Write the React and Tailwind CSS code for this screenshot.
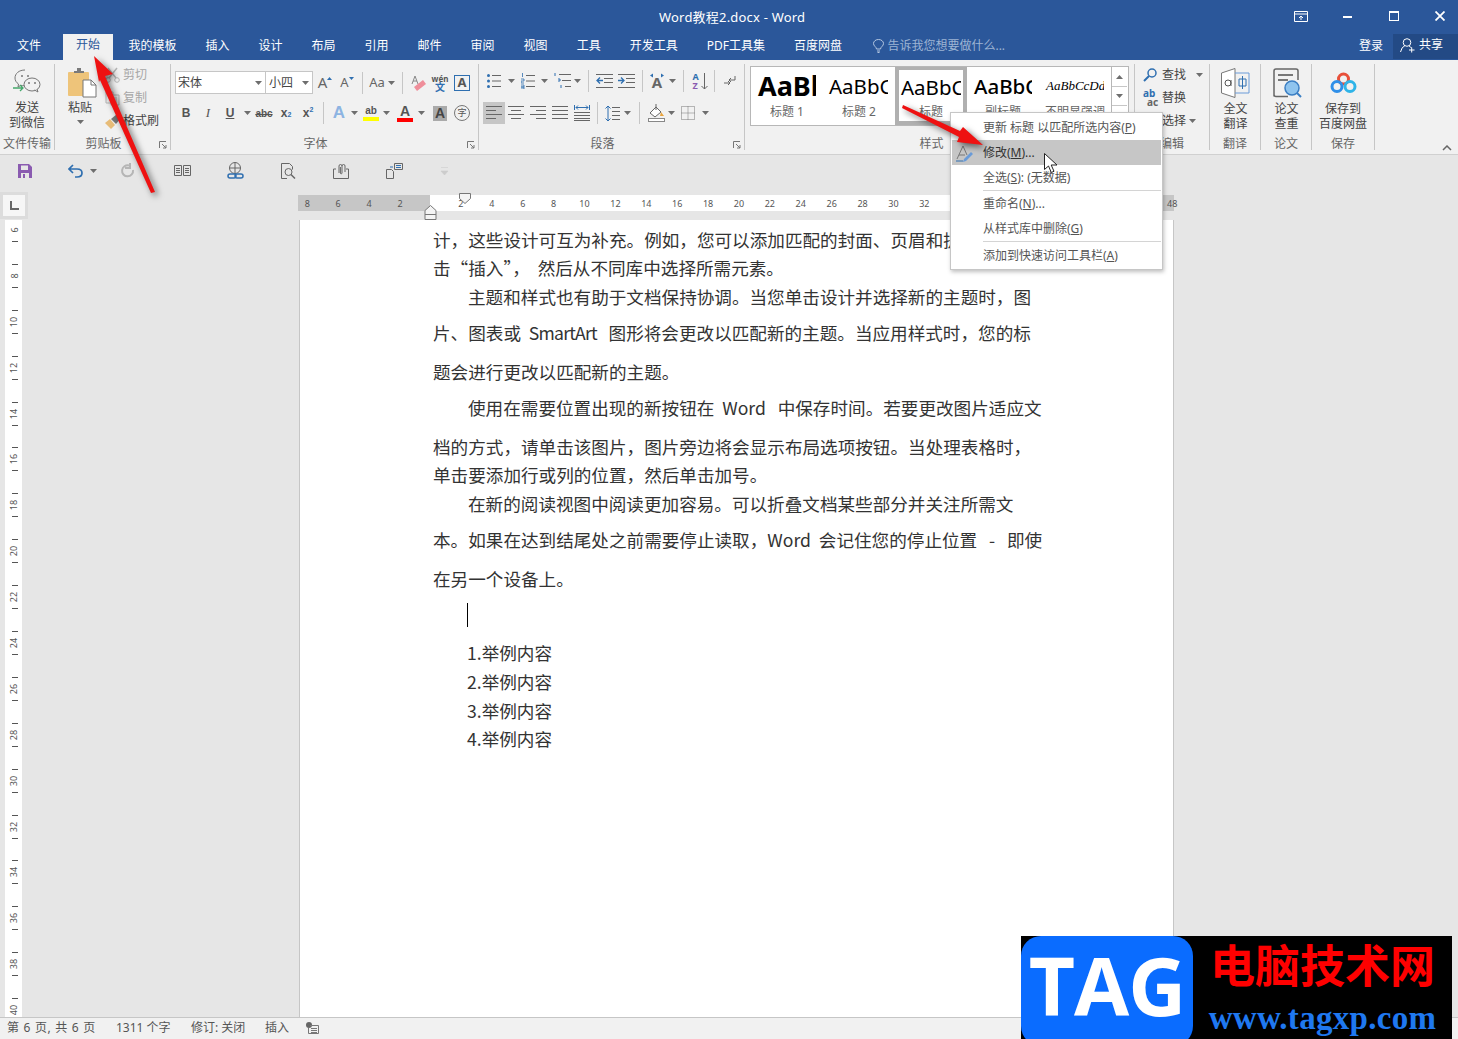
import React from "react";

const cjk = "font-['Noto_Sans','Noto_Sans_CJK_SC',sans-serif]";

const Caret = ({ className = "" }) => (
  <svg width="7" height="4" viewBox="0 0 7 4" className={className}>
    <path d="M0 0h7L3.5 4z" fill="#6e6e6e" />
  </svg>
);

const Cell = ({ className = "w-[22px]", children }) => (
  <div className={"flex h-[22px] shrink-0 items-center justify-center " + className}>{children}</div>
);

const Sep = ({ className = "" }) => <div className={"h-[22px] w-px shrink-0 bg-[#c6c6c6] " + className} />;

const Launcher = () => (
  <svg width="8" height="8" viewBox="0 0 8 8" className="absolute right-[3px] bottom-[1px]">
    <path d="M0.5 7V0.5H7M3 3l4 4M7 4v3H4" fill="none" stroke="#777" />
  </svg>
);

const Group = ({ label, className, labelClass = "", launcher, children }) => (
  <div className={"flex h-[86px] shrink-0 flex-col border-r border-[#c6c6c6] " + className}>
    <div className="h-[72px]">{children}</div>
    <div className={"relative h-[14px] text-center text-[12px] leading-[16px] text-[#666] " + labelClass}>
      {label}
      {launcher && <Launcher />}
    </div>
  </div>
);

const Lines = ({ d, stroke = "#666", w = 16, h = 14 }) => (
  <svg width={w} height={h} viewBox={`0 0 ${w} ${h}`}>
    <path d={d} fill="none" stroke={stroke} />
  </svg>
);

const BigText = ({ a, b }) => (
  <div className="mt-[3px] text-center text-[12px] leading-[15px] text-[#444]">
    <div>{a}</div>
    <div>{b}</div>
  </div>
);

const WeChatIcon = () => (
  <svg width="28" height="26" viewBox="0 0 28 26">
    <path d="M12 1C6 1 2 4.500 2 9c0 2.500 1.300 4.500 3.500 6L5 18l3-1.700c1 .3 1.800.4 3 .4" fill="none" stroke="#777" />
    <ellipse cx="19" cy="15.500" rx="8" ry="6.500" fill="#f1f1f1" stroke="#777" />
    <path d="M24 20l1 3-3.500-2" fill="#f1f1f1" stroke="#777" />
    <circle cx="9" cy="7" r="1" fill="#777" /><circle cx="15" cy="7" r="1" fill="#777" />
    <circle cx="16" cy="14" r="1" fill="#777" /><circle cx="22" cy="14" r="1" fill="#777" />
    <path d="M0 19h10M7 16l3 3-3 3" fill="none" stroke="#45a86b" strokeWidth="1.300" />
  </svg>
);

const PasteIcon = () => (
  <svg width="29" height="30" viewBox="0 0 29 30">
    <rect x="0" y="4" width="21" height="24" rx="1" fill="#eec47a" />
    <path d="M6 5V3h3V0h4v3h3v2z" fill="#7a7a7a" />
    <path d="M15 12h8l5 5v12H15z" fill="#fff" stroke="#777" />
    <path d="M23 12v5h5" fill="none" stroke="#777" />
  </svg>
);

const Scissors = () => (
  <svg width="15" height="16" viewBox="0 0 15 16">
    <path d="M3 1l8 10M12 1L4 11" stroke="#b5b5b5" strokeWidth="1.500" fill="none" />
    <circle cx="3" cy="13" r="2.300" fill="none" stroke="#b5b5b5" />
    <circle cx="12" cy="13" r="2.300" fill="none" stroke="#b5b5b5" />
  </svg>
);

const CopyIcon = () => (
  <svg width="15" height="15" viewBox="0 0 15 15">
    <path d="M1 1h7v11H1z" fill="none" stroke="#b5b5b5" />
    <path d="M6 4h8v10H6z" fill="#eee" stroke="#b5b5b5" />
    <path d="M8 7h4M8 9h4M8 11h4" stroke="#b5b5b5" />
  </svg>
);

const Brush = () => (
  <svg width="16" height="15" viewBox="0 0 16 15">
    <path d="M0 9l5-4 5 6-4 4z" fill="#e7bc78" />
    <path d="M6 5l6-5 4 4-5 6z" fill="#777" />
  </svg>
);

const Eraser = () => (
  <svg width="17" height="18" viewBox="0 0 17 18">
    <path d="M2 10l3-8 3 8M3 7h4" fill="none" stroke="#888" />
    <path d="M4 13l9-7 3 4-9 7z" fill="#ef8e9a" />
  </svg>
);

const LightGrid = () => (
  <svg width="14" height="14" viewBox="0 0 14 14">
    <path d="M.5.500h13v13H.500zM7 .500v13M.500 7h13" fill="none" stroke="#777" strokeDasharray="1 1" />
  </svg>
);

const ParaRow1 = () => (
  <div className="flex items-center">
    <Cell>
      <svg width="14" height="16" viewBox="0 0 14 16">
        <path d="M5 2.500h9M5 8h9M5 13.500h9" stroke="#666" />
        <circle cx="1.500" cy="2.500" r="1.500" fill="#2f6fb0" /><circle cx="1.500" cy="8" r="1.500" fill="#2f6fb0" /><circle cx="1.500" cy="13.500" r="1.500" fill="#2f6fb0" />
      </svg>
    </Cell>
    <Cell className="w-[12px]"><Caret /></Cell>
    <Cell>
      <svg width="14" height="16" viewBox="0 0 14 16">
        <path d="M5 2.500h9M5 8h9M5 13.500h9" stroke="#666" />
        <path d="M1.500 0v4M0 6h3v2H0v2h3M0 12h3v2H0h3v2H0" fill="none" stroke="#2f6fb0" strokeWidth=".8" />
      </svg>
    </Cell>
    <Cell className="w-[10px]"><Caret /></Cell>
    <Cell className="ml-[2px] w-[22px]">
      <svg width="17" height="16" viewBox="0 0 17 16">
        <path d="M5 1.500h12M8 7.500h9M11 13.500h6" stroke="#666" />
        <path d="M1 0v3M4 6h2v2H4M7 12v3" fill="none" stroke="#2f6fb0" />
      </svg>
    </Cell>
    <Cell className="w-[8px]"><Caret /></Cell>
    <Sep className="ml-[7px]" />
    <Cell className="ml-[4px] w-[22px]">
      <svg width="17" height="14" viewBox="0 0 17 14">
        <path d="M0 .500h17M8 4.500h9M8 8.500h9M0 13.500h17" stroke="#666" />
        <path d="M7 6.500H1M4 3.500l-3 3 3 3" fill="none" stroke="#2f6fb0" strokeWidth="1.300" />
      </svg>
    </Cell>
    <Cell>
      <svg width="17" height="14" viewBox="0 0 17 14">
        <path d="M0 .500h17M8 4.500h9M8 8.500h9M0 13.500h17" stroke="#666" />
        <path d="M0 6.500h6M3 3.500l3 3-3 3" fill="none" stroke="#2f6fb0" strokeWidth="1.300" />
      </svg>
    </Cell>
    <Sep className="ml-[5px]" />
    <Cell className="ml-[3px] w-[22px]">
      <div className="relative flex h-[16px] w-[16px] items-end justify-center text-[15px] leading-[14px] font-bold text-[#666]">
        A
        <svg width="16" height="5" viewBox="0 0 16 5" className="absolute top-0 left-0">
          <path d="M1 2.500l3-2v4zM15 2.500l-3-2v4z" fill="#2f6fb0" />
        </svg>
      </div>
    </Cell>
    <Cell className="w-[8px]"><Caret /></Cell>
    <Sep className="ml-[7px]" />
    <Cell className="ml-[5px] w-[22px]">
      <div className="flex h-[18px] w-[8px] flex-col text-[9px] leading-[9px] font-bold">
        <span className="text-[#2f6fb0]">A</span>
        <span className="text-[#8a5bb0]">Z</span>
      </div>
      <svg width="7" height="17" viewBox="0 0 7 17"><path d="M3.500 0v16M.5 13l3 3 3-3" fill="none" stroke="#666" /></svg>
    </Cell>
    <Sep className="ml-[3px]" />
    <Cell className="ml-[4px] w-[22px]">
      <svg width="12" height="13" viewBox="0 0 12 13">
        <path d="M11 1v4H5M7 3L5 5l2 2M0 8h6M4 6l2 2-2 2" fill="none" stroke="#666" />
      </svg>
    </Cell>
  </div>
);

const aligns = [
  "M0 .500h16M0 4.500h10M0 8.500h16M0 12.500h10",
  "M0 .500h16M3 4.500h10M0 8.500h16M3 12.500h10",
  "M0 .500h16M6 4.500h10M0 8.500h16M6 12.500h10",
  "M0 .500h16M0 4.500h16M0 8.500h16M0 12.500h16",
];

const ParaRow2 = () => (
  <div className="flex items-center">
    <Cell className="w-[22px] bg-[#c6c6c6]"><Lines d={aligns[0]} /></Cell>
    <Cell><Lines d={aligns[1]} /></Cell>
    <Cell><Lines d={aligns[2]} /></Cell>
    <Cell><Lines d={aligns[3]} /></Cell>
    <Cell>
      <svg width="16" height="16" viewBox="0 0 16 16">
        <path d="M0 7.500h16M0 10.500h16M0 13.500h16M0 15.500h16" stroke="#666" />
        <path d="M.5 0v5M15.500 0v5M2 2.500h12M4 .500l-2 2 2 2M12 .500l2 2-2 2" fill="none" stroke="#2f6fb0" />
      </svg>
    </Cell>
    <Sep className="ml-[4px]" />
    <Cell className="ml-[3px] w-[22px]">
      <svg width="15" height="17" viewBox="0 0 15 17">
        <path d="M7 2.500h8M7 6.500h8M7 10.500h8M7 14.500h8" stroke="#666" />
        <path d="M3 1v15M.5 3.500L3 1l2.500 2.500M.5 13.500L3 16l2.500-2.500" fill="none" stroke="#2f6fb0" />
      </svg>
    </Cell>
    <Cell className="w-[8px]"><Caret /></Cell>
    <Sep className="ml-[8px]" />
    <Cell className="ml-[5px] w-[22px]">
      <svg width="17" height="18" viewBox="0 0 17 18">
        <path d="M2 9l6-6 5 5-6 5z" fill="#fff" stroke="#666" />
        <path d="M13 8l3 4h-4z" fill="#e8a33d" />
        <path d="M8 0v6" stroke="#666" />
        <rect x=".5" y="14.500" width="16" height="3" fill="#fff" stroke="#888" />
      </svg>
    </Cell>
    <Cell className="w-[8px]"><Caret /></Cell>
    <Cell className="ml-[2px] w-[22px]"><LightGrid /></Cell>
    <Cell className="ml-[2px] w-[8px]"><Caret /></Cell>
  </div>
);

const StyleItem = ({ sample, label, className = "", selected }) => (
  <div
    className={
      "flex h-[58px] w-[72px] shrink-0 flex-col items-center overflow-hidden " +
      (selected ? "border-[4px] border-t-[3px] border-[#b0b0b0]" : "")
    }
  >
    <div className={"self-start overflow-hidden whitespace-nowrap text-black " + className}>{sample}</div>
    <div className="text-[12px] leading-[14px] text-[#666]">{label}</div>
  </div>
);

const Ribbon = () => (
  <div className="flex h-[95px] shrink-0 border-b border-[#d0d0d0] bg-[#f1f1f1] pt-[4px] text-[#444]">
    <Group label="文件传输" className="w-[55px]">
      <div className="flex flex-col items-center pt-[5px]">
        <WeChatIcon />
        <div className="pt-[2px]"><BigText a="发送" b="到微信" /></div>
      </div>
    </Group>

    <Group label="剪贴板" labelClass="pr-[18px]" className="w-[116px]" launcher>
      <div className="flex pt-[4px]">
        <div className="ml-[13px] flex w-[29px] flex-col items-start">
          <PasteIcon />
          <div className="mt-[2px] text-[12px] leading-[15px]">粘贴</div>
          <Caret className="mt-[5px] ml-[9px]" />
        </div>
        <div className="-mt-[4px] ml-[8px] flex flex-col gap-[1px] text-[12px]">
          <div className="flex h-[22px] items-center gap-[3px] text-[#a6a6a6]"><Scissors />剪切</div>
          <div className="flex h-[22px] items-center gap-[3px] text-[#a6a6a6]"><CopyIcon />复制</div>
          <div className="flex h-[22px] items-center gap-[2px] text-[#444]"><Brush />格式刷</div>
        </div>
      </div>
    </Group>

    <Group label="字体" labelClass="pr-[18px]" className="w-[308px]" launcher>
      <div className="pt-[7px] pl-[4px]">
        <div className="flex h-[23px] items-center">
          <div className="flex h-[23px] w-[91px] shrink-0 items-center justify-between border border-[#c6c6c6] bg-white pr-[3px] pl-[2px] text-[12px]">
            宋体<Caret />
          </div>
          <div className="-ml-px flex h-[23px] w-[48px] shrink-0 items-center justify-between border border-[#c6c6c6] bg-white pr-[3px] pl-[3px] text-[12px]">
            小四<Caret />
          </div>
          <Cell className="ml-px w-[22px]">
            <span className="text-[15px] text-[#666]">A</span>
            <svg width="5" height="3" viewBox="0 0 5 3" className="mb-[9px]"><path d="M0 3l2.500-3L5 3z" fill="#2f6fb0" /></svg>
          </Cell>
          <Cell>
            <span className="text-[13px] text-[#666]">A</span>
            <svg width="5" height="3" viewBox="0 0 5 3" className="mb-[9px]"><path d="M0 0l2.500 3L5 0z" fill="#2f6fb0" /></svg>
          </Cell>
          <Sep className="ml-[4px]" />
          <Cell className="w-[38px] gap-[3px]">
            <span className="text-[13px] text-[#666]">Aa</span><Caret />
          </Cell>
          <Sep className="ml-[1px]" />
          <Cell className="ml-[4px] w-[22px]"><Eraser /></Cell>
          <Cell>
            <div className="flex flex-col items-center text-[8px] leading-[9px] font-bold text-[#555]">
              wén<span className="text-[10px] text-[#2f6fb0]">文</span>
            </div>
          </Cell>
          <Cell>
            <div className="flex h-[16px] w-[16px] items-center justify-center border border-[#2f6fb0] text-[13px] font-bold text-[#555]">A</div>
          </Cell>
        </div>
        <div className="mt-[8px] flex h-[22px] items-center font-['Liberation_Sans',sans-serif] text-[#555]">
          <Cell className="w-[22px] text-[12px] font-bold">B</Cell>
          <Cell className="w-[22px] font-['Liberation_Serif',serif] text-[13px] italic">I</Cell>
          <Cell className="w-[22px] text-[12px] font-bold underline">U</Cell>
          <Cell className="w-[12px]"><Caret /></Cell>
          <Cell className="w-[22px] text-[10px] font-bold line-through">abc</Cell>
          <Cell className="w-[22px] text-[12px] font-bold">x<span className="mt-[5px] text-[7px] text-[#2f6fb0]">2</span></Cell>
          <Cell className="w-[22px] text-[12px] font-bold">x<span className="mb-[5px] text-[7px] text-[#2f6fb0]">2</span></Cell>
          <Sep className="ml-[4px]" />
          <Cell className="ml-[4px] w-[22px] text-[17px] font-bold text-[#8db4e2]">A</Cell>
          <Cell className="w-[8px]"><Caret /></Cell>
          <Cell className="ml-[2px] w-[22px]">
            <div className="flex w-[17px] flex-col items-center">
              <span className="text-[10px] leading-[12px] font-bold">ab</span>
              <div className="h-[4px] w-[16px] bg-[#ffff00]" />
            </div>
          </Cell>
          <Cell className="w-[8px]"><Caret /></Cell>
          <Cell className="ml-[4px] w-[22px]">
            <div className="flex w-[17px] flex-col items-center">
              <span className="text-[14px] leading-[13px] font-bold">A</span>
              <div className="h-[4px] w-[16px] bg-[#ff0000]" />
            </div>
          </Cell>
          <Cell className="w-[10px]"><Caret /></Cell>
          <Cell className="ml-[3px] w-[22px]">
            <div className="flex h-[15px] w-[14px] items-center justify-center bg-[#aaa] text-[14px] font-bold text-[#444]">A</div>
          </Cell>
          <Cell>
            <div className={"flex h-[16px] w-[16px] items-center justify-center rounded-full border border-[#777] text-[9px] " + cjk}>字</div>
          </Cell>
        </div>
      </div>
    </Group>

    <Group label="段落" labelClass="pr-[18px]" className="w-[266px]" launcher>
      <div className="pt-[6px] pl-[4px]">
        <ParaRow1 />
        <div className="mt-[10px]"><ParaRow2 /></div>
      </div>
    </Group>

    <Group label="样式" labelClass="pr-[16px]" className="w-[390px]">
      <div className="flex pt-[2px] pl-[5px]">
        <div className="flex h-[60px] w-[379px] border border-[#b7b7b7] bg-white">
          <StyleItem sample="AaBb" label="标题 1" className="w-[65px] pl-[7px] text-[27px] leading-[38px] font-bold" />
          <StyleItem sample="AaBbC" label="标题 2" className="w-[65px] pl-[6px] text-[20.500px] leading-[38px]" />
          <StyleItem sample="AaBbC" label="标题" className="w-[62px] pl-[2px] text-[20.500px] leading-[35px]" selected />
          <StyleItem sample="AaBbC" label="副标题" className="w-[65px] pl-[7px] text-[20.500px] leading-[38px] font-medium" />
          <StyleItem sample="AaBbCcDd" label="不明显强调" className="w-[65px] pl-[7px] font-['Liberation_Serif',serif] text-[13px] leading-[38px] italic" />
          <div className="flex w-[16px] flex-col border-l border-[#b7b7b7]">
            <div className="flex h-[20px] items-center justify-center border-b border-[#c6c6c6]"><Caret className="rotate-180" /></div>
            <div className="flex h-[19px] items-center justify-center border-b border-[#c6c6c6]"><Caret /></div>
            <div className="flex flex-1 items-center justify-center"><Caret /></div>
          </div>
        </div>
      </div>
    </Group>

    <Group label="编辑" className="w-[75px]">
      <div className="-mt-px flex flex-col pl-[8px] text-[12px]">
        <div className="flex h-[23px] items-center gap-[5px]">
          <svg width="14" height="14" viewBox="0 0 14 14">
            <circle cx="9" cy="5" r="4" fill="none" stroke="#2f6fb0" strokeWidth="1.500" />
            <path d="M6 8l-5 5" stroke="#2f6fb0" strokeWidth="2" />
          </svg>
          查找<Caret className="ml-[5px]" />
        </div>
        <div className="flex h-[24px] items-center gap-[3px]">
          <div className="flex w-[16px] flex-col text-[10px] leading-[9px] font-bold">
            <span className="text-[#2f6fb0]">ab</span>
            <span className="pl-[4px] text-[#666]">ac</span>
          </div>
          替换
        </div>
        <div className="flex h-[22px] items-center gap-[3px] pl-[19px]">选择<Caret /></div>
      </div>
    </Group>

    <Group label="翻译" className="w-[51px]">
      <div className="flex flex-col items-center pt-[4px] pl-px">
        <svg width="29" height="30" viewBox="0 0 29 30">
          <path d="M.5 5L14 .5v29L.5 25z" fill="#fff" stroke="#777" />
          <path d="M14 5h14v20H14" fill="none" stroke="#6a9bd8" />
          <path d="M18 11h7v7h-7zM21.500 8v13" fill="none" stroke="#2f6fb0" />
          <circle cx="7" cy="15" r="3" fill="none" stroke="#555" />
          <path d="M10 12v6" stroke="#555" />
        </svg>
        <BigText a="全文" b="翻译" />
      </div>
    </Group>

    <Group label="论文" className="w-[51px]">
      <div className="flex flex-col items-center pt-[4px] pl-px">
        <svg width="30" height="30" viewBox="0 0 30 30">
          <path d="M2 28.500V3q0-2 2-2h20q2 0 2 2v9M16 28.500H4q-2 0-2-2" fill="none" stroke="#666" strokeWidth="1.500" />
          <path d="M6 6h15v2H6zM6 11h10v2H6z" fill="#777" />
          <circle cx="20" cy="20" r="7" fill="#8fc4ee" stroke="#3b7fc4" strokeWidth="1.500" />
          <path d="M25 25l4 4" stroke="#3b7fc4" strokeWidth="2" />
        </svg>
        <BigText a="论文" b="查重" />
      </div>
    </Group>

    <Group label="保存" className="w-[63px]">
      <div className="flex flex-col items-center pt-[7px]">
        <svg width="27" height="27" viewBox="0 0 27 27">
          <circle cx="13.500" cy="8" r="5" fill="none" stroke="#e8503a" strokeWidth="3" />
          <circle cx="7" cy="15.500" r="5" fill="none" stroke="#2f8fe8" strokeWidth="3" />
          <circle cx="20" cy="15.500" r="5" fill="none" stroke="#2fb4e8" strokeWidth="3" />
        </svg>
        <BigText a="保存到" b="百度网盘" />
      </div>
    </Group>

    <div className="flex flex-1 items-end justify-end pr-[6px] pb-[3px]">
      <svg width="10" height="6" viewBox="0 0 10 6"><path d="M1 5l4-4 4 4" fill="none" stroke="#666" strokeWidth="1.500" /></svg>
    </div>
  </div>
);

const QuickBar = () => (
  <div className="flex h-[37px] shrink-0 items-center bg-[#e6e6e6] pb-[6px] pl-[18px]">
    <svg width="14" height="14" viewBox="0 0 14 14">
      <path d="M0 0h11l3 3v11H0z" fill="#8a5bb0" />
      <path d="M3 1.500h7V6H3z" fill="#e6e6e6" />
      <path d="M3 9h8v5H3z" fill="#e6e6e6" />
      <path d="M5 10h2v4H5z" fill="#8a5bb0" />
    </svg>
    <svg width="15" height="14" viewBox="0 0 15 14" className="ml-[36px]">
      <path d="M5 1L1 5l4 4M1 5h8q5 0 5 4t-5 4H7" fill="none" stroke="#2f6fb0" strokeWidth="1.700" />
    </svg>
    <Caret className="ml-[7px]" />
    <svg width="15" height="15" viewBox="0 0 15 15" className="ml-[23px]">
      <path d="M9 2.500a5.500 5.500 0 1 0 4 4.500M10 0v5H5" fill="none" stroke="#b5b5b5" strokeWidth="2" />
    </svg>
    <svg width="17" height="11" viewBox="0 0 17 11" className="ml-[39px]">
      <path d="M.5.500h7v10h-7zM9.500.500h7v10h-7zM2 3.500h4M2 5.500h4M2 7.500h4M11 3.500h4M11 5.500h4M11 7.500h4" fill="none" stroke="#666" />
    </svg>
    <svg width="17" height="17" viewBox="0 0 17 17" className="ml-[36px]">
      <circle cx="8" cy="6" r="5.500" fill="none" stroke="#666" />
      <path d="M2.500 6h11M8 .5v11" stroke="#666" />
      <path d="M3 12h4a2 2 0 0 1 0 4H3a2 2 0 0 1 0-4zM10 12h4a2 2 0 0 1 0 4h-4a2 2 0 0 1 0-4z" fill="#e6e6e6" stroke="#2f6fb0" strokeWidth="1.500" />
    </svg>
    <svg width="15" height="16" viewBox="0 0 15 16" className="ml-[37px]">
      <path d="M6 15.500H.5V.5h8l3 3v3" fill="none" stroke="#666" />
      <circle cx="7.500" cy="9" r="3.500" fill="none" stroke="#666" />
      <path d="M10 11.500l4 4" stroke="#666" strokeWidth="1.500" />
    </svg>
    <svg width="16" height="16" viewBox="0 0 16 16" className="ml-[37px]">
      <path d="M3 6H.5v9.500h15V6H13" fill="none" stroke="#666" />
      <path d="M6 10V3a1.500 1.500 0 0 1 3 0v7a.8.8 0 0 1-1.600 0V4M9 3a1.500 1.500 0 0 1 3 0v6" fill="none" stroke="#666" />
    </svg>
    <svg width="17" height="16" viewBox="0 0 17 16" className="ml-[37px]">
      <path d="M.5 6.500h5l2 2v7H.500zM8.500.500h8v6h-8z" fill="none" stroke="#666" />
      <path d="M4 4h3M10 2.500h5M10 4.500h5" stroke="#2f6fb0" />
    </svg>
    <svg width="9" height="8" viewBox="0 0 9 8" className="ml-[37px]">
      <path d="M1 .5h7M1 4h7l-3.500 4z" fill="#ccc" stroke="#ccc" strokeWidth=".6" />
    </svg>
  </div>
);

const hrNums = [];
for (let n = 2; n <= 46; n += 2) hrNums.push(n);

const RulerRow = () => (
  <div className="flex h-[28px] shrink-0 bg-[#e6e6e6]">
    <div className="h-[27px] w-[28px] shrink-0 bg-[#dcdcdc] p-[3px]">
      <div className="flex h-full w-full items-center justify-center bg-[#f6f6f6]">
        <div className="h-[9px] w-[9px] border-b-2 border-l-2 border-[#666]" />
      </div>
    </div>
    <div className="relative mt-[3px] ml-[270px] flex h-[16px] w-[876px] text-[9px] leading-[17px] text-[#555]">
      <div className="flex w-[132px] justify-end overflow-hidden bg-[#c6c6c6] pr-[14.600px]">
        {[8, 6, 4, 2].map((n) => (
          <div key={n} className="w-[30.900px] shrink-0 text-center">{n}</div>
        ))}
      </div>
      <div className="flex w-[733px] overflow-hidden bg-white pl-[15.500px]">
        {hrNums.map((n) => (
          <div key={n} className="w-[30.900px] shrink-0 text-center">{n}</div>
        ))}
      </div>
      <div className="w-[11px] bg-[#c6c6c6] pl-[4px] whitespace-nowrap">48</div>
      <svg width="13" height="12" viewBox="0 0 13 12" className="absolute top-[-2px] left-[161px]">
        <path d="M.5.500h11v5l-5.500 5-5.500-5z" fill="#f4f4f4" stroke="#777" />
      </svg>
      <svg width="13" height="15" viewBox="0 0 13 15" className="absolute top-[10px] left-[126px]">
        <path d="M6.500.500l5.500 5v9H1v-9zM1 9.500h11" fill="#f4f4f4" stroke="#777" />
      </svg>
    </div>
  </div>
);

const vrNums = [6, 8, 10, 12, 14, 16, 18, 20, 22, 24, 26, 28, 30, 32, 34, 36, 38, 40];

const VRuler = () => (
  <div className="ml-[5px] h-full w-[17px] overflow-hidden bg-white">
    <div className="-mt-[13px]">
      {vrNums.map((n) => (
        <div key={n} className="flex h-[45.900px] flex-col items-center justify-center pl-[2px] text-[#555]">
          <div className="h-px w-[6px] bg-[#555]" />
          <div className="flex h-[22px] items-center justify-center text-[9px] -rotate-90">{n}</div>
          <div className="h-px w-[6px] bg-[#555]" />
        </div>
      ))}
    </div>
  </div>
);

const lines = [
  ["", "计，这些设计可互为补充。例如，您可以添加匹配的封面、页眉和提要栏。单"],
  ["", "击“插入”，  然后从不同库中选择所需元素。"],
  ["mt-[1px] pl-[35px]", "主题和样式也有助于文档保持协调。当您单击设计并选择新的主题时，图"],
  ["mt-[8px]", <>片、图表或  <span className="tracking-[-0.800px]">SmartArt</span>   图形将会更改以匹配新的主题。当应用样式时，您的标</>],
  ["mt-[11px]", "题会进行更改以匹配新的主题。"],
  ["mt-[8px] pl-[35px]", "使用在需要位置出现的新按钮在  Word   中保存时间。若要更改图片适应文"],
  ["mt-[11px]", "档的方式，请单击该图片，图片旁边将会显示布局选项按钮。当处理表格时，"],
  ["", "单击要添加行或列的位置，然后单击加号。"],
  ["mt-[1px] pl-[35px]", "在新的阅读视图中阅读更加容易。可以折叠文档某些部分并关注所需文"],
  ["mt-[8px]", "本。如果在达到结尾处之前需要停止读取，Word  会记住您的停止位置   -   即使"],
  ["mt-[11px]", "在另一个设备上。"],
];

const Page = () => (
  <div className="h-full w-[875px] shrink-0 border-x border-[#c6c6c6] bg-white pt-[6px] pl-[133px] font-['Noto_Sans_CJK_SC','Noto_Sans',sans-serif] text-[17.600px] leading-[28px] whitespace-pre text-[#333]">
    {lines.map(([cls, text], i) => (
      <div key={i} className={"h-[28px] " + cls}>{text}</div>
    ))}
    <div className="mt-[10px] h-[24px] pl-[34px]">
      <div className="h-[24px] w-px bg-black" />
    </div>
    <div className="mt-[12px] pl-[34px]">
      <div className="h-[28px]">1.举例内容</div>
      <div className="mt-[1px] h-[28px]">2.举例内容</div>
      <div className="mt-[1px] h-[28px]">3.举例内容</div>
      <div className="h-[28px]">4.举例内容</div>
    </div>
  </div>
);

const StatusBar = () => (
  <div className="flex h-[22px] shrink-0 items-center border-t border-[#c6c6c6] bg-[#f1f1f1] pb-[2px] pl-[7px] text-[12px] text-[#555]">
    <span className="w-[109px] tracking-[0.700px]">第 6 页, 共 6 页</span>
    <span className="w-[75px]">1311 个字</span>
    <span className="w-[74px]">修订: 关闭</span>
    <span className="w-[41px]">插入</span>
    <svg width="13" height="12" viewBox="0 0 13 12">
      <circle cx="3" cy="3" r="3" fill="#666" />
      <path d="M4 3.500h8.500v8h-10V6M5 6.500h6M5 8.500h6M5 10.500h6" fill="none" stroke="#777" />
    </svg>
  </div>
);

const MenuItem = ({ children, active, className = "h-[25px]" }) => (
  <div className={"flex items-center pl-[31px] text-[12px] " + (active ? "bg-[#c6c6c6] text-[#333] " : "text-[#555] ") + className}>
    {children}
  </div>
);

const StyleMenu = () => (
  <div className="absolute top-[112px] left-[950px] w-[213px] border border-[#c6c6c6] bg-white p-px shadow-[1px_2px_4px_rgba(0,0,0,0.25)]">
    <div className="h-[1px]" />
    <MenuItem>更新 标题 以匹配所选内容(<u>P</u>)</MenuItem>
    <MenuItem active className="relative h-[25px]">
      <svg width="18" height="17" viewBox="0 0 18 17" className="absolute top-[5px] left-[4px]">
        <path d="M1 14L7 1l4 9M3 10h6" fill="none" stroke="#777" />
        <path d="M8 14l7-7 2 2-7 7-3 1z" fill="#6a9bd8" />
        <path d="M0 16h7" stroke="#2f6fb0" />
      </svg>
      修改(<u>M</u>)...
    </MenuItem>
    <MenuItem>全选(<u>S</u>): (无数据)</MenuItem>
    <div className="ml-[31px] h-px bg-[#d4d4d4]" />
    <MenuItem>重命名(<u>N</u>)...</MenuItem>
    <MenuItem className="h-[25px] pt-px">从样式库中删除(<u>G</u>)</MenuItem>
    <div className="ml-[31px] h-px bg-[#d4d4d4]" />
    <MenuItem className="h-[26px] pt-[2px]">添加到快速访问工具栏(<u>A</u>)</MenuItem>
  </div>
);

const Watermark = () => (
  <div className="absolute top-[936px] left-[1021px] flex h-[103px] w-[431px] overflow-hidden bg-black">
    <div className="flex h-[110px] w-[172px] shrink-0 items-start justify-center rounded-[20px] bg-[#0a6cff] font-['Open_Sans',sans-serif] text-[80px] leading-[98px] font-bold tracking-[-1px] text-white">
      TAG
    </div>
    <div className="flex flex-1 flex-col items-center">
      <div className={"mt-[3px] text-[45px] leading-[54px] font-bold text-[#ff0000] " + cjk}>电脑技术网</div>
      <div className="mt-[8px] font-['Liberation_Serif',serif] text-[33px] leading-[34px] font-bold tracking-[0.300px] text-[#1f78f0]">www.tagxp.com</div>
    </div>
  </div>
);

const RedArrows = () => (
  <>
    <svg width="120" height="170" viewBox="0 0 120 170" className="absolute top-[40px] left-[70px] drop-shadow-[3px_3px_3px_rgba(0,0,0,0.55)]">
      <path d="M24 16L29 42 30 40 81 153 85 152 35 36 43 34z" fill="#ee1111" />
    </svg>
    <svg width="110" height="70" viewBox="0 0 110 70" className="absolute top-[95px] left-[895px] drop-shadow-[3px_3px_3px_rgba(0,0,0,0.55)]">
      <path d="M8 10L65 36 68 32 88 50 62 47 64 42 7 13z" fill="#ee1111" />
    </svg>
  </>
);

const Cursor = () => (
  <svg width="17" height="22" viewBox="0 0 17 22" className="absolute top-[153px] left-[1044px]">
    <path d="M.5.500v16l4-3.500 2.800 6.500 2.700-1.200-2.800-6.300H13z" fill="#fff" stroke="#222" />
  </svg>
);

const tabs = ["我的模板", "插入", "设计", "布局", "引用", "邮件", "审阅", "视图", "工具", "开发工具", "PDF工具集", "百度网盘"];

const TitleBar = () => (
  <div className="flex h-[32px] shrink-0 items-center bg-[#2b579a] text-white">
    <div className="ml-[659px] w-[600px] pt-[3px] text-[13px] tracking-[0.200px]">Word教程2.docx - Word</div>
    <svg width="14" height="11" viewBox="0 0 14 11" className="ml-[35px]">
      <path d="M.5.500h13v10H.500zM.5 3h13M7 9V5M5 7l2-2 2 2" fill="none" stroke="#fff" />
    </svg>
    <div className="ml-[35px] h-[2px] w-[9px] translate-y-[1px] bg-white" />
    <div className="ml-[37px] h-[10px] w-[10px] border border-t-2 border-white" />
    <svg width="10" height="10" viewBox="0 0 10 10" className="ml-[36px]">
      <path d="M.5.500l9 9M9.500.500l-9 9" stroke="#fff" strokeWidth="1.800" />
    </svg>
  </div>
);

const TabBar = () => (
  <div className="flex h-[28px] shrink-0 items-end bg-[#2b579a] text-[12px] text-white">
    <div className="mb-[4px] w-[63px] pl-[17px] leading-[20px]">文件</div>
    <div className="mr-px h-[26px] w-[50px] bg-[#f1f1f1] pt-[1px] pl-[13px] text-left leading-[20px] text-[#2b579a]">开始</div>
    <div className="flex">
      {tabs.map((t) => (
        <div key={t} className="mb-[4px] px-[14.500px] leading-[20px] text-nowrap">{t}</div>
      ))}
    </div>
    <div className="mb-[4px] ml-[17px] flex items-center gap-[3px] leading-[20px] text-[#9db4d4]">
      <svg width="11" height="14" viewBox="0 0 11 14">
        <path d="M3.500 10c0-2-3-3-3-5.500a5 4 0 0 1 10 0c0 2.500-3 3.500-3 5.500zM4 12h3M4.500 13.500h2" fill="none" stroke="#b5c7e0" />
      </svg>
      告诉我您想要做什么...
    </div>
    <div className="mb-[4px] ml-auto leading-[20px]">登录</div>
    <div className="mb-px ml-[10px] flex h-[25px] w-[65px] items-center gap-[4px] bg-[#234a85] pb-[3px] pl-[7px]">
      <svg width="15" height="15" viewBox="0 0 15 15">
        <circle cx="7" cy="4.500" r="3.800" fill="none" stroke="#fff" />
        <path d="M.5 14q1-5 4.500-6.500M9 8q1.500.6 2.500 2M9 12h5.500M11.700 9.500v5" fill="none" stroke="#fff" />
      </svg>
      共享
    </div>
  </div>
);

export default function App() {
  return (
    <div className={"relative flex h-[1039px] w-[1458px] flex-col overflow-hidden bg-[#e6e6e6] " + cjk}>
      <TitleBar />
      <TabBar />
      <Ribbon />
      <QuickBar />
      <RulerRow />
      <div className="flex min-h-0 flex-1">
        <div className="h-full w-[299px] shrink-0">
          <VRuler />
        </div>
        <Page />
      </div>
      <StatusBar />
      <StyleMenu />
      <Cursor />
      <RedArrows />
      <Watermark />
    </div>
  );
}
